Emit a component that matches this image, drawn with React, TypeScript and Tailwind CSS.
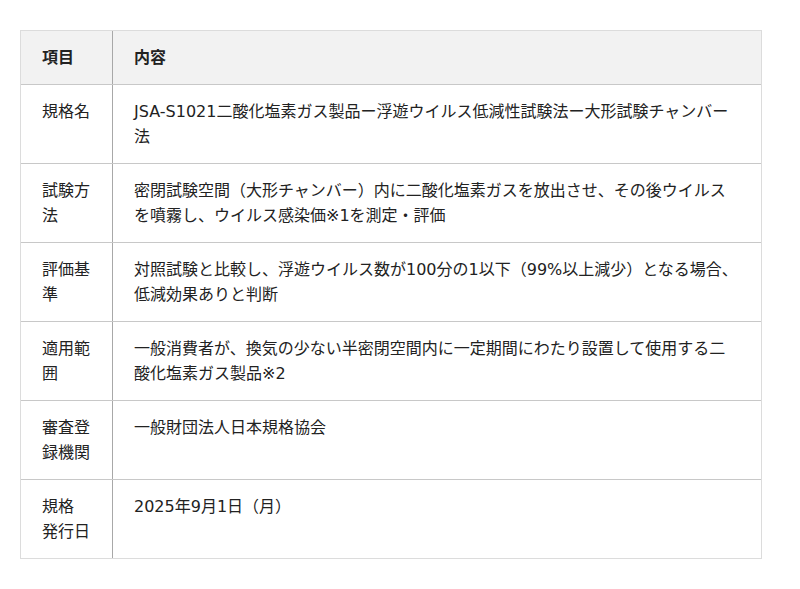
import React from "react";

const rows: { label: React.ReactNode; content: string }[] = [
  { label: "規格名", content: "JSA-S1021二酸化塩素ガス製品ー浮遊ウイルス低減性試験法ー大形試験チャンバー法" },
  { label: (<>試験方<br />法</>), content: "密閉試験空間（大形チャンバー）内に二酸化塩素ガスを放出させ、その後ウイルスを噴霧し、ウイルス感染価※1を測定・評価" },
  { label: (<>評価基<br />準</>), content: "対照試験と比較し、浮遊ウイルス数が100分の1以下（99%以上減少）となる場合、低減効果ありと判断" },
  { label: (<>適用範<br />囲</>), content: "一般消費者が、換気の少ない半密閉空間内に一定期間にわたり設置して使用する二酸化塩素ガス製品※2" },
  { label: (<>審査登<br />録機関</>), content: "一般財団法人日本規格協会" },
  { label: (<>規格<br />発行日</>), content: "2025年9月1日（月）" },
];

export default function App() {
  return (
    <div
      className="min-h-[589px] w-[800px] bg-white pt-[30px] pl-[20px] text-[#222] text-[16px] leading-[25px]"
      style={{ fontFamily: '"DejaVu Sans", "Noto Sans CJK JP", sans-serif' }}
    >
      <div className="w-[742px] border border-[#dcdcdc]">
        <div className="flex bg-[#f2f2f2] border-b border-[#c8c8c8] font-bold">
          <div className="w-[92px] shrink-0 border-r border-[#a8a8a8] px-[21px] py-[14px] whitespace-nowrap">項目</div>
          <div className="flex-1 px-[21px] py-[14px]">内容</div>
        </div>
        {rows.map((r, i) => (
          <div
            key={i}
            className={i < rows.length - 1 ? "flex border-b border-[#c8c8c8]" : "flex"}
          >
            <div className="w-[92px] shrink-0 border-r border-[#a8a8a8] px-[21px] py-[14px] min-h-[78px] whitespace-nowrap">
              {r.label}
            </div>
            <div className="flex-1 px-[21px] py-[14px]">{r.content}</div>
          </div>
        ))}
      </div>
    </div>
  );
}
